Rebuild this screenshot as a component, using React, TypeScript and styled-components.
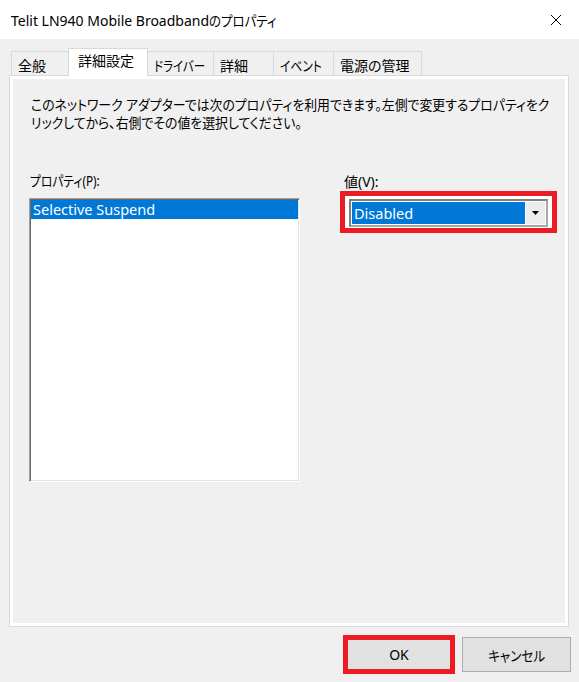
import React from 'react';
import styled, { createGlobalStyle, css } from 'styled-components';

const GlobalStyle = createGlobalStyle`
  html, body {
    margin: 0;
    padding: 0;
    background: #f0f0f0;
  }
  body {
    font-family: "Noto Sans", "Noto Sans CJK JP", sans-serif;
    font-size: 14px;
    color: #000;
  }
`;

// the reference font has much narrower kana than Noto CJK; squeeze those runs
const Condensed = styled.span<{ $scale: number; $origin?: string }>`
  display: inline-block;
  white-space: nowrap;
  font-feature-settings: "palt" 1;
  transform: scaleX(${({ $scale }) => $scale});
  transform-origin: ${({ $origin }) => $origin ?? 'left'} center;
`;

const Window = styled.div`
  width: 579px;
  height: 682px;
  display: flex;
  flex-direction: column;
  background: #f0f0f0;
  overflow: hidden;
`;

const TitleBar = styled.div`
  height: 39px;
  flex: none;
  display: flex;
  align-items: center;
  justify-content: space-between;
  padding: 0 18px 0 11px;
  background: #fff;
  font-size: 14px;
`;

const CloseButton = styled.div`
  width: 10px;
  height: 10px;
  display: flex;
`;

const Body = styled.div`
  flex: 1;
  display: flex;
  flex-direction: column;
  padding: 9px 8px 8px 9px;
`;

const TabStrip = styled.div`
  height: 27px;
  display: flex;
  align-items: flex-end;
  padding-left: 3px;
  position: relative;
  z-index: 1;
`;

const Tab = styled.div<{ $width: number; $active?: boolean }>`
  box-sizing: border-box;
  flex: none;
  width: ${({ $width }) => $width + 1}px;
  height: 24px;
  margin-left: -1px;
  padding: 5px 0 0 6px;
  border: 1px solid #d9d9d9;
  border-bottom: none;
  background: #f0f0f0;
  line-height: 18px;
  white-space: nowrap;
  overflow: hidden;

  ${({ $active }) =>
    $active &&
    css`
      height: 28px;
      margin-bottom: -1px;
      padding: 3px 0 0 9px;
      background: #fff;
    `}
`;

const Panel = styled.div`
  box-sizing: border-box;
  height: 552px;
  margin-right: 2px;
  padding: 20px 0 0 19px;
  border: 1px solid #d9d9d9;
  box-shadow: inset 0 0 0 3px #fff;
  background: #f0f0f0;
  display: flex;
  flex-direction: column;
`;

const Description = styled.div`
  display: flex;
  flex-direction: column;
  align-items: flex-start;
  line-height: 18px;
  padding-left: 2px;
`;

const Columns = styled.div`
  display: flex;
  align-items: flex-start;
  margin-top: 40px;
`;

const LeftColumn = styled.div`
  flex: none;
  width: 271px;
  display: flex;
  flex-direction: column;
`;

const RightColumn = styled.div`
  flex: none;
  display: flex;
  flex-direction: column;
  margin-left: 40px;
  margin-top: 1px;
`;

const FieldLabel = styled.div<{ $indent?: number }>`
  line-height: 18px;
  padding-left: ${({ $indent }) => $indent ?? 1}px;
  white-space: nowrap;
`;

const ListBox = styled.div`
  box-sizing: border-box;
  height: 284px;
  margin-top: 8px;
  padding: 1px;
  border: 1px solid;
  border-color: #a0a0a0 #fff #fff #a0a0a0;
  box-shadow: inset 1px 1px 0 #696969, inset -1px -1px 0 #e3e3e3;
  background: #fff;
`;

const ListItem = styled.div<{ $selected?: boolean }>`
  height: 19px;
  line-height: 19px;
  padding-left: 2px;
  font-size: 14.5px;
  white-space: nowrap;
  background: ${({ $selected }) => ($selected ? '#0078d7' : 'transparent')};
  color: ${({ $selected }) => ($selected ? '#fff' : '#000')};
`;

const Highlight = styled.div`
  border: 5px solid #ed1c24;
  background: #fff;
`;

const ValueFrame = styled(Highlight)`
  align-self: flex-start;
  padding: 3px 4px 1px 4px;
`;

const SelectBox = styled.div`
  box-sizing: border-box;
  width: 199px;
  height: 28px;
  display: flex;
  padding: 1px;
  border: 2px solid;
  border-color: #7f7f7f #a8a8a8 #a8a8a8 #7f7f7f;
  background: #fff;
`;

const SelectValue = styled.div`
  flex: 1;
  background: #0078d7;
  color: #fff;
  font-size: 14.5px;
  line-height: 22px;
  padding-left: 2px;
`;

const DropButton = styled.div`
  width: 19px;
  margin-left: 1px;
  display: flex;
  align-items: center;
  justify-content: center;
  background: #ececec;
`;

const Footer = styled.div`
  display: flex;
  justify-content: flex-end;
  align-items: center;
  gap: 7px;
  padding-top: 8px;
`;

const OkFrame = styled(Highlight)`
  width: 102px;
  height: 29px;
  display: flex;
  align-items: center;
  justify-content: center;
  background: #e1e1e1;
`;

const Button = styled.div`
  box-sizing: border-box;
  width: 109px;
  height: 35px;
  display: flex;
  align-items: center;
  justify-content: center;
  border: 1px solid #adadad;
  background: #e1e1e1;
`;

const tabs = [
  { label: '全般', width: 57, scale: 1 },
  { label: '詳細設定', width: 79, scale: 1, active: true },
  { label: 'ドライバー', width: 66, scale: 0.82 },
  { label: '詳細', width: 60, scale: 1 },
  { label: 'イベント', width: 60, scale: 0.84 },
  { label: '電源の管理', width: 88, scale: 1 },
];

const App = () => {
  return (
    <>
      <GlobalStyle />
      <Window>
        <TitleBar>
          <span>
            Telit LN940 Mobile Broadband<Condensed $scale={0.89}>のプロパティ</Condensed>
          </span>
          <CloseButton>
            <svg width="10" height="10" viewBox="0 0 10 10">
              <path d="M0 0L10 10M10 0L0 10" stroke="#000" strokeWidth="1" />
            </svg>
          </CloseButton>
        </TitleBar>
        <Body>
          <TabStrip>
            {tabs.map((tab) => (
              <Tab key={tab.label} $width={tab.width} $active={tab.active}>
                <Condensed $scale={tab.scale}>{tab.label}</Condensed>
              </Tab>
            ))}
          </TabStrip>
          <Panel>
            <Description>
              <Condensed $scale={0.92}>
                このネットワーク アダプターでは次のプロパティを利用できます。左側で変更するプロパティをク
              </Condensed>
              <Condensed $scale={0.92}>リックしてから、右側でその値を選択してください。</Condensed>
            </Description>
            <Columns>
              <LeftColumn>
                <FieldLabel>
                  <Condensed $scale={0.84}>プロパティ(P):</Condensed>
                </FieldLabel>
                <ListBox>
                  <ListItem $selected>Selective Suspend</ListItem>
                </ListBox>
              </LeftColumn>
              <RightColumn>
                <FieldLabel $indent={4}>値(V):</FieldLabel>
                <ValueFrame>
                  <SelectBox>
                    <SelectValue>Disabled</SelectValue>
                    <DropButton>
                      <svg width="7" height="4" viewBox="0 0 7 4">
                        <path d="M0 0H7L3.5 4Z" fill="#000" />
                      </svg>
                    </DropButton>
                  </SelectBox>
                </ValueFrame>
              </RightColumn>
            </Columns>
          </Panel>
          <Footer>
            <OkFrame>OK</OkFrame>
            <Button>
              <Condensed $scale={0.9} $origin="center">
                キャンセル
              </Condensed>
            </Button>
          </Footer>
        </Body>
      </Window>
    </>
  );
};

export default App;
